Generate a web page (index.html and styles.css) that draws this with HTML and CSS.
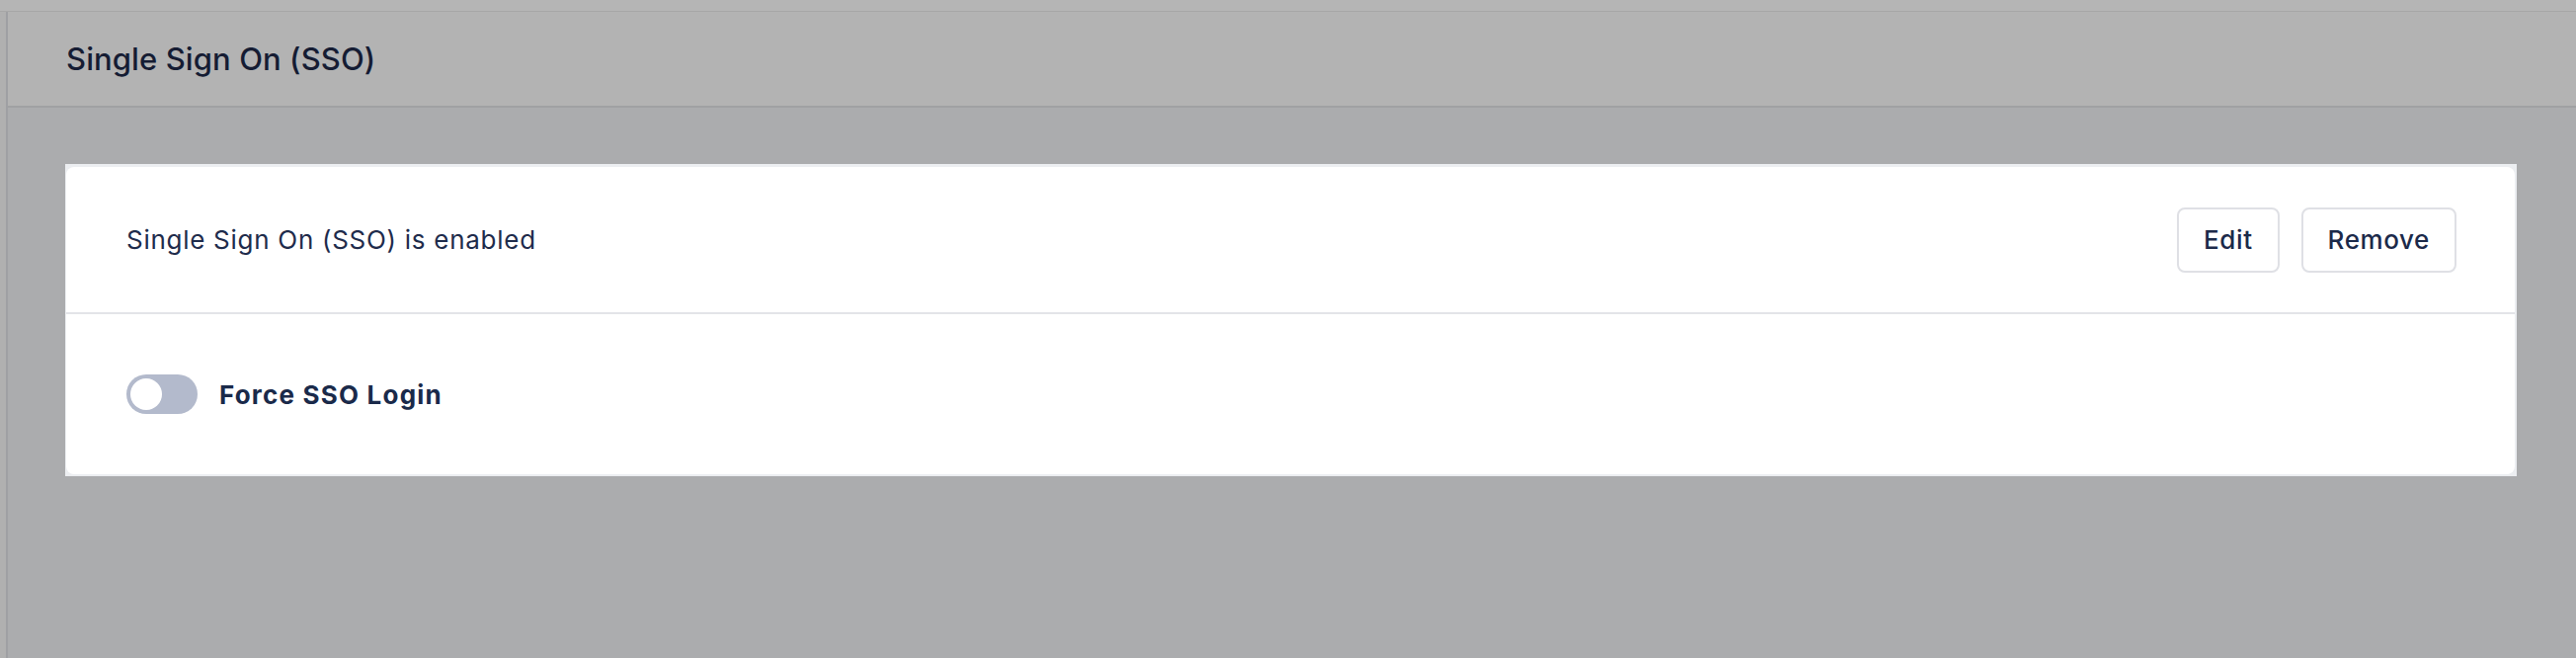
FILE: index.html
```html
<!DOCTYPE html>
<html lang="en">
<head>
<meta charset="utf-8">
<title>Single Sign On (SSO)</title>
<link rel="stylesheet" href="styles.css">
</head>
<body>
<div class="topbar"></div>
<div class="main">
  <div class="rail"></div>
  <div class="content">
    <div class="header"><h1 class="title">Single Sign On (SSO)</h1></div>
    <div class="page">
      <div class="spot">
        <div class="card">
          <div class="row row-status">
            <span class="status">Single Sign On (SSO) is enabled</span>
            <div class="actions">
              <button class="btn">Edit</button>
              <button class="btn">Remove</button>
            </div>
          </div>
          <div class="row row-toggle">
            <span class="toggle"><span class="knob"></span></span>
            <span class="toggle-label">Force SSO Login</span>
          </div>
        </div>
      </div>
    </div>
  </div>
</div>
</body>
</html>
```
FILE: styles.css
```css
* { box-sizing: border-box; }
html, body { margin: 0; padding: 0; height: 100%; }
body {
  font-family: Inter, "Noto Sans", sans-serif;
  background: #abacae;
  color: #1c2a4a;
  display: flex;
  flex-direction: column;
  overflow: hidden;
}
.topbar {
  height: 12px;
  background: #b5b5b5;
  border-bottom: 1px solid #a7a7a7;
  flex: none;
}
.main { flex: 1; display: flex; }
.rail {
  width: 8px;
  background: #b0b0b0;
  border-right: 2px solid #9fa0a3;
  flex: none;
}
.content { flex: 1; display: flex; flex-direction: column; }
.header {
  height: 97px;
  background: #b3b3b3;
  border-bottom: 2px solid #a0a1a3;
  display: flex;
  align-items: center;
  padding-left: 59px;
}
.title {
  margin: 0;
  font-size: 31px;
  font-weight: 500;
  color: #151c33;
  letter-spacing: 0.1px;
}
.page {
  flex: 1;
  background: #abacae;
  padding: 57px 60px 0 58px;
}
.spot {
  background: #eceef1;
  padding: 3px 2px 2px 1px;
}
.card {
  background: #fff;
  border-radius: 8px;
}
.row {
  display: flex;
  align-items: center;
  padding: 0 59px 0 61px;
}
.row-status {
  height: 149px;
  justify-content: space-between;
  border-bottom: 2px solid #e3e4e8;
}
.status { font-size: 26px; color: #1f2c4c; letter-spacing: 0.72px; }
.actions { display: flex; gap: 22px; }
.btn {
  font-family: inherit;
  font-size: 26px;
  font-weight: 500;
  letter-spacing: 0.6px;
  color: #1c2a4a;
  background: #fff;
  border: 2px solid #dfe0e5;
  border-radius: 8px;
  height: 66px;
  padding: 0 25px;
}
.row-toggle { height: 162px; gap: 22px; }
.toggle {
  width: 72px;
  height: 40px;
  border-radius: 20px;
  background: #b3bacc;
  display: flex;
  align-items: center;
  padding-left: 4px;
}
.knob {
  width: 32px;
  height: 32px;
  border-radius: 50%;
  background: #fff;
}
.toggle-label { font-size: 26px; font-weight: 700; color: #1a2a4a; letter-spacing: 1.2px; }
```
